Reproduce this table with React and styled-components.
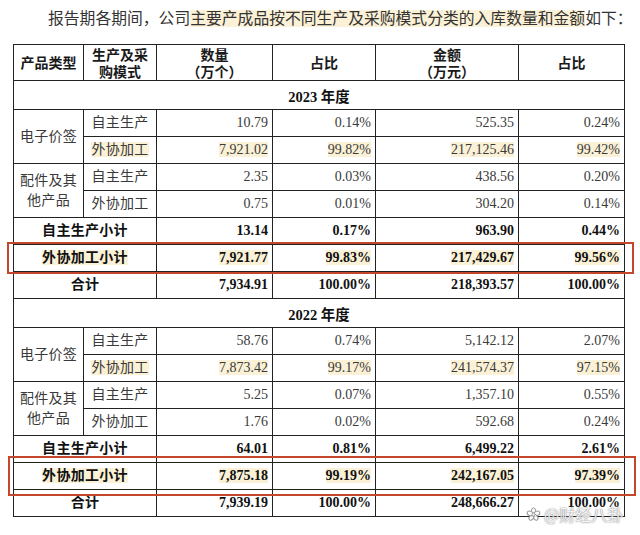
import React from 'react';
import styled, { createGlobalStyle } from 'styled-components';

const GlobalStyle = createGlobalStyle`
  html, body {
    margin: 0;
    padding: 0;
    background: #fff;
  }
  body {
    font-family: "Liberation Serif", "Noto Sans CJK SC", serif;
    color: #222;
  }
`;

const Page = styled.div`
  position: relative;
  width: 640px;
  height: 535px;
  overflow: hidden;
  padding-top: 7px;
  box-sizing: border-box;
`;

const Intro = styled.p`
  margin: 0;
  padding-left: 48px;
  font-size: 15.8px;
  line-height: 24px;
  color: #333;
  white-space: nowrap;
`;

const Mark = styled.span`
  background: #fbf1d6;
`;

const Table = styled.table`
  margin: 13px 0 0 13px;
  width: 611px;
  table-layout: fixed;
  border-collapse: collapse;
  font-size: 14px;
`;

const Th = styled.th`
  border: 1px solid #222;
  height: 35px;
  padding: 0 2px;
  font-family: "Noto Sans CJK SC", sans-serif;
  font-weight: 700;
  font-size: 14px;
  line-height: 17px;
  color: #1a1a1a;
  text-align: center;
`;

const Td = styled.td`
  border: 1px solid #222;
  height: 26px;
  padding: 0 ${(p) => (p.$num ? '4px' : '2px')};
  text-align: ${(p) => (p.$num ? 'right' : 'center')};
  font-weight: ${(p) => (p.$bold ? 700 : 400)};
  color: ${(p) => (p.$bold ? '#111' : '#3a3a3a')};
  font-size: 14px;
  line-height: 20px;
  letter-spacing: ${(p) => (p.$num ? '0' : '0.3px')};
  white-space: ${(p) => (p.$num ? 'nowrap' : 'normal')};
  vertical-align: middle;
`;

const YearCell = styled.td`
  border: 1px solid #222;
  height: 26px;
  text-align: center;
  font-weight: 700;
  font-size: 14.5px;
  color: #111;
`;

const Highlight = styled.div`
  position: absolute;
  left: ${(p) => p.$x}px;
  top: ${(p) => p.$y}px;
  width: ${(p) => p.$w}px;
  height: ${(p) => p.$h}px;
  border: 2px solid #c4472c;
  box-sizing: border-box;
  pointer-events: none;
`;

const Watermark = styled.div`
  position: absolute;
  left: 526px;
  top: 502px;
  display: flex;
  align-items: center;
  gap: 3px;
  font-family: "Noto Sans CJK SC", sans-serif;
  font-size: 16px;
  color: rgba(255, 255, 255, 0.92);
  text-shadow: 0 0 1px #777, 0 0 2px #999;
  opacity: 0.9;
`;

const sections = [
  {
    year: '2023',
    groups: [
      ['电子价签', [
        ['自主生产', ['10.79', '0.14%', '525.35', '0.24%'], false],
        ['外协加工', ['7,921.02', '99.82%', '217,125.46', '99.42%'], true],
      ]],
      ['配件及其他产品', [
        ['自主生产', ['2.35', '0.03%', '438.56', '0.20%'], false],
        ['外协加工', ['0.75', '0.01%', '304.20', '0.14%'], false],
      ]],
    ],
    self: ['13.14', '0.17%', '963.90', '0.44%'],
    outsource: ['7,921.77', '99.83%', '217,429.67', '99.56%'],
    total: ['7,934.91', '100.00%', '218,393.57', '100.00%'],
  },
  {
    year: '2022',
    groups: [
      ['电子价签', [
        ['自主生产', ['58.76', '0.74%', '5,142.12', '2.07%'], false],
        ['外协加工', ['7,873.42', '99.17%', '241,574.37', '97.15%'], true],
      ]],
      ['配件及其他产品', [
        ['自主生产', ['5.25', '0.07%', '1,357.10', '0.55%'], false],
        ['外协加工', ['1.76', '0.02%', '592.68', '0.24%'], false],
      ]],
    ],
    self: ['64.01', '0.81%', '6,499.22', '2.61%'],
    outsource: ['7,875.18', '99.19%', '242,167.05', '97.39%'],
    total: ['7,939.19', '100.00%', '248,666.27', '100.00%'],
  },
];

const wrap = (text, on) => (on ? <Mark>{text}</Mark> : text);

const SumRow = ({ label, values, marked }) => (
  <tr>
    <Td colSpan={2} $bold>{wrap(label, marked)}</Td>
    {values.map((v, i) => (
      <Td key={i} $num $bold>{wrap(v, marked)}</Td>
    ))}
  </tr>
);

const Section = ({ data }) => (
  <>
    <tr>
      <YearCell colSpan={6}>{data.year} 年度</YearCell>
    </tr>
    {data.groups.map(([name, rows]) =>
      rows.map(([mode, values, marked], r) => (
        <tr key={name + mode}>
          {r === 0 && <Td rowSpan={rows.length}>{name}</Td>}
          <Td>{wrap(mode, marked)}</Td>
          {values.map((v, i) => (
            <Td key={i} $num>{wrap(v, marked)}</Td>
          ))}
        </tr>
      ))
    )}
    <SumRow label="自主生产小计" values={data.self} />
    <SumRow label="外协加工小计" values={data.outsource} marked />
    <SumRow label="合计" values={data.total} />
  </>
);

const FlowerIcon = () => (
  <svg width="15" height="15" viewBox="0 0 16 16" fill="none" stroke="#888" strokeWidth="1">
    {[0, 72, 144, 216, 288].map((a) => (
      <ellipse key={a} cx="8" cy="4.2" rx="2.3" ry="3.2" fill="#fff" transform={`rotate(${a} 8 8)`} />
    ))}
    <circle cx="8" cy="8" r="1.6" fill="#fff" />
  </svg>
);

export default function App() {
  return (
    <Page>
      <GlobalStyle />
      <Intro>
        报告期各期间，公司<Mark>主要产成品按不同生产及采购模式分类的入库数量和金额</Mark>如下：
      </Intro>
      <Table>
        <colgroup>
          <col style={{ width: 70 }} />
          <col style={{ width: 73 }} />
          <col style={{ width: 116 }} />
          <col style={{ width: 103 }} />
          <col style={{ width: 143 }} />
          <col style={{ width: 106 }} />
        </colgroup>
        <thead>
          <tr>
            <Th>产品类型</Th>
            <Th>生产及采<br />购模式</Th>
            <Th>数量<br />（万个）</Th>
            <Th>占比</Th>
            <Th>金额<br />（万元）</Th>
            <Th>占比</Th>
          </tr>
        </thead>
        <tbody>
          {sections.map((s) => (
            <Section key={s.year} data={s} />
          ))}
        </tbody>
      </Table>
      <Highlight $x={7} $y={242} $w={627} $h={32} />
      <Highlight $x={8} $y={456} $w={628} $h={40} />
      <Watermark>
        <FlowerIcon />
        <span>@财经八卦</span>
      </Watermark>
    </Page>
  );
}
